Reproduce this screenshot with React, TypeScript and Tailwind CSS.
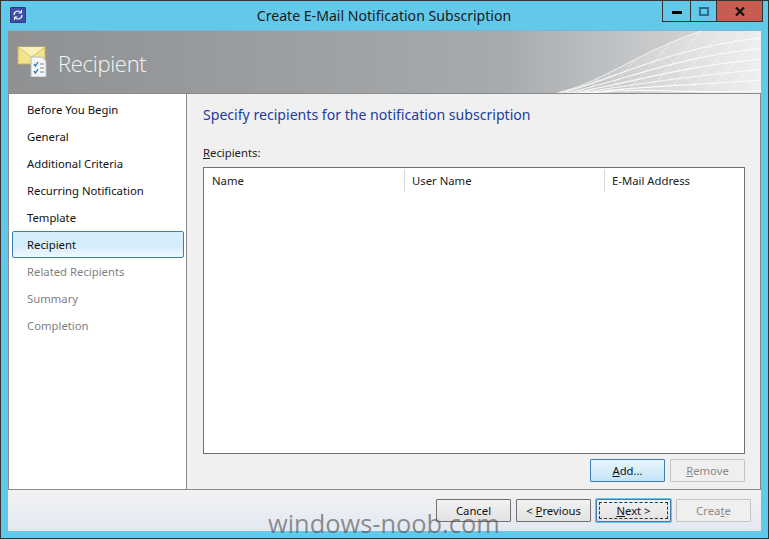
const steps: [string, boolean][] = [
  ["Before You Begin", true],
  ["General", true],
  ["Additional Criteria", true],
  ["Recurring Notification", true],
  ["Template", true],
  ["Recipient", true],
  ["Related Recipients", false],
  ["Summary", false],
  ["Completion", false],
];

function Btn({ children, variant = "normal", className = "" }: { children: React.ReactNode; variant?: "normal" | "hot" | "disabled" | "default"; className?: string }) {
  const styles = {
    normal: "border-[#707070] bg-gradient-to-b from-[#f2f2f2] to-[#e2e2e2] text-[#111]",
    hot: "border-[#3c7fb1] bg-gradient-to-b from-[#eaf6fd] to-[#c4e4f8] text-[#111]",
    disabled: "border-[#c4c4c4] bg-[#efefef] text-[#8a8a8a]",
    default: "border-[#3c7fb1] bg-gradient-to-b from-[#f2f2f2] to-[#e2e2e2] text-[#111]",
  } as const;
  return (
    <div className={`relative h-[23px] w-[75px] border rounded-[1px] flex items-center justify-center pt-[1px] text-[11.3px] ${styles[variant]} ${className}`}>
      {variant === "default" && <div className="absolute inset-[2px] border border-dashed border-[#333]" />}
      <span className="relative">{children}</span>
    </div>
  );
}

function Banner() {
  const curves: string[] = [];
  for (let i = 0; i < 6; i++) {
    const end = 7 + i * 10.5;
    curves.push(`M${4 + i * 6} 62 C ${55 + i * 10} ${50 + i}, ${110 + i * 5} ${end + 10 - i}, 205 ${end}`);
  }
  const diag: string[] = [];
  for (let i = 0; i < 12; i++) {
    diag.push(`M${10 + i * 20} 62 L ${62 + i * 21} 0`);
    diag.push(`M${30 + i * 19} 20 L ${70 + i * 19} 62`);
  }
  return (
    <svg width="205" height="62" viewBox="0 0 205 62" className="absolute right-0 top-0">
      <defs>
        <clipPath id="net">
          <path d="M0 62 C 50 50, 80 22, 145 0 L 205 0 L 205 62 Z" />
        </clipPath>
        <linearGradient id="netFill" x1="0" x2="1" y1="0" y2="0">
          <stop offset="0" stopColor="#fff" stopOpacity="0.05" />
          <stop offset="0.6" stopColor="#fff" stopOpacity="0.3" />
          <stop offset="1" stopColor="#fff" stopOpacity="0.45" />
        </linearGradient>
      </defs>
      <g clipPath="url(#net)">
        <rect width="205" height="62" fill="url(#netFill)" />
        {diag.map((d, i) => (
          <path key={i} d={d} fill="none" stroke="#ffffff" strokeOpacity={i % 2 ? 0.25 : 0.45} strokeWidth="1" />
        ))}
      </g>
      <path d="M1 62 C 50 50, 80 22, 145 0" fill="none" stroke="#ffffff" strokeOpacity="0.7" strokeWidth="1" />
      {curves.map((d, i) => (
        <path key={i} d={d} fill="none" stroke="#ffffff" strokeOpacity="0.85" strokeWidth="1.2" />
      ))}
    </svg>
  );
}

export default function App() {
  return (
    <div className="relative h-[539px] w-[769px] overflow-hidden border border-[#333] bg-[#63c9ea] flex flex-col" style={{ fontFamily: '"Noto Sans", "Open Sans", sans-serif' }}>
      <div className="flex h-[29px] shrink-0 items-start">
        <div className="ml-[9px] mt-[6px] flex h-[16px] w-[16px] shrink-0 items-center justify-center rounded-[1px] border border-[#2a3a80] bg-[#3f4fa5]">
          <svg width="12" height="12" viewBox="0 0 12 12" fill="none" stroke="#fff" strokeWidth="1.2">
            <path d="M2 6a4 4 0 0 1 7-2.6M10 6a4 4 0 0 1-7 2.6" />
            <path d="M9.5 1v3h-3M2.5 11V8h3" strokeWidth="1" />
          </svg>
        </div>
        <div className="flex-1 pl-[80px] pt-[5px] text-center text-[14.1px] leading-[19px] text-[#1a1a1a]">Create E-Mail Notification Subscription</div>
        <div className="mr-[5px] flex h-[21px] w-[101px] shrink-0 border-x border-b border-[#333]">
          <div className="flex w-[28px] items-center justify-center border-r border-[#333]">
            <div className="mt-[3px] h-[3px] w-[10px] bg-black" />
          </div>
          <div className="flex w-[25px] items-center justify-center">
            <div className="h-[9px] w-[10px] border-2 border-[#2c6c8c]" />
          </div>
          <div className="flex flex-1 items-center justify-center border-l border-[#333] bg-[#c75c50]">
            <svg width="10" height="9" viewBox="0 0 10 9" stroke="#111" strokeWidth="2.2"><path d="M1 .5l8 8M9 .5l-8 8" /></svg>
          </div>
        </div>
      </div>

      <div className="mx-[7px] flex h-[502px] shrink-0 flex-col border-t border-[#7eb6cd]">
        <div className="relative flex h-[62px] shrink-0 items-center overflow-hidden bg-gradient-to-r from-[#8e9092] via-[#a8abad] via-[66%] to-[#dfe0e2] pl-[9px]">
          <svg width="32" height="32" viewBox="0 0 32 32" className="mb-[2px] shrink-0">
            <path d="M1 2h27v17H1z" fill="#f3e38c" stroke="#c9b45c" />
            <path d="M1 2l13.5 10L28 2" fill="#fbf1b6" stroke="#d8c468" />
            <path d="M14 12h11l4 4v16H14z" fill="#f4f6f8" stroke="#b4bcc4" />
            <path d="M17 19l1.5 2 2.5-4M17 26l1.5 2 2.5-4" fill="none" stroke="#2a7cc0" strokeWidth="1.4" />
            <path d="M23 19h4M23 23h4M23 27h4" stroke="#7a8a9a" strokeWidth="1.2" />
          </svg>
          <div className="ml-[9px] mt-[2px] text-[22px] font-light tracking-[-0.3px] text-[#f4f5f5]" style={{ fontFamily: '"Open Sans", "Noto Sans", sans-serif' }}>Recipient</div>
          <Banner />
        </div>

        <div className="flex h-[396px] shrink-0 border-t border-[#8a8a8a] bg-[#f0f0f0]">
          <div className="w-[179px] shrink-0 border-x border-[#8a8a8a] bg-white pl-[3px] pr-[2px] pt-[2px]">
            {steps.map(([s, on]) => (
              <div
                key={s}
                className={`flex h-[27px] items-center pl-[14px] pt-[2px] text-[11.3px] ${on ? "text-[#111]" : "text-[#7f7f7f]"} ${s === "Recipient" ? "rounded-[2px] border border-[#3c7fb1] bg-gradient-to-b from-[#d8effc] via-[#d2edfb] to-[#eef8fe]" : "border border-transparent"}`}
              >
                {s}
              </div>
            ))}
          </div>
          <div className="flex min-w-0 flex-1 flex-col border-r border-[#8a8a8a] pl-[16px] pr-[15px]">
            <div className="mt-[9px] text-[14.1px] leading-[24px] text-[#1c3d9c]">Specify recipients for the notification subscription</div>
            <div className="mt-[18px] text-[11.3px] leading-[16px] text-[#222]"><span className="underline">R</span>ecipients:</div>
            <div className="mt-[6px] h-[287px] border border-[#707070] bg-white">
              <div className="flex h-[25px] text-[11.3px] leading-[23px] text-[#222]">
                <div className="w-[201px] border-r border-[#d8d8d8] pl-[8px] h-[23px] mt-[1px]">Name</div>
                <div className="w-[200px] border-r border-[#d8d8d8] pl-[7px] h-[23px] mt-[1px]">User Name</div>
                <div className="pl-[7px] mt-[1px]">E-Mail Address</div>
              </div>
            </div>
            <div className="mt-[5px] flex justify-end gap-[5px]">
              <Btn variant="hot"><span className="underline">A</span>dd...</Btn>
              <Btn variant="disabled"><span className="underline">R</span>emove</Btn>
            </div>
          </div>
        </div>

        <div className="flex h-[42px] shrink-0 justify-end gap-[5px] border-t border-[#8a8a8a] bg-gradient-to-b from-[#f2f2f2] to-[#e3e8f2] pr-[10px] pt-[9px]">
          <Btn>Cancel</Btn>
          <Btn>&lt; <span className="underline">P</span>revious</Btn>
          <Btn variant="default" className="ring-1 ring-[#63c9ea]"><span className="underline">N</span>ext &gt;</Btn>
          <Btn variant="disabled">Crea<span className="underline">t</span>e</Btn>
        </div>
      </div>

      <div className="absolute left-[267px] top-[505px] text-[25.4px] leading-[34px] text-[#4a4a4a]/60" style={{ fontFamily: '"Open Sans", sans-serif' }}>windows-noob.com</div>
    </div>
  );
}
